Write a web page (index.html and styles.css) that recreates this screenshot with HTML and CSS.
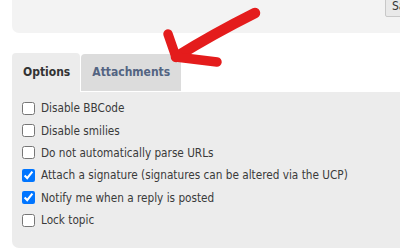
FILE: index.html
```html
<!DOCTYPE html>
<html>
<head>
<meta charset="utf-8">
<link rel="stylesheet" href="styles.css">
</head>
<body>
<div class="page">
  <div class="top-panel">
    <button class="btn">Save draft</button>
  </div>
  <div class="tabs">
    <div class="tab active">Options</div>
    <div class="tab">Attachments</div>
  </div>
  <div class="panel">
    <label class="row"><input type="checkbox"><span>Disable BBCode</span></label>
    <label class="row"><input type="checkbox"><span>Disable smilies</span></label>
    <label class="row"><input type="checkbox"><span>Do not automatically parse URLs</span></label>
    <label class="row"><input type="checkbox" checked><span>Attach a signature (signatures can be altered via the UCP)</span></label>
    <label class="row"><input type="checkbox" checked><span>Notify me when a reply is posted</span></label>
    <label class="row"><input type="checkbox"><span>Lock topic</span></label>
  </div>
  <svg class="arrow" width="400" height="252" viewBox="0 0 400 252">
    <path d="M255 13 Q213 34 176 57" fill="none" stroke="#e41c1c" stroke-width="10.5" stroke-linecap="round"/>
    <path d="M168 34 L176 57 L217 62" fill="none" stroke="#e41c1c" stroke-width="9.5" stroke-linecap="round" stroke-linejoin="round"/>
  </svg>
</div>
</body>
</html>
```
FILE: styles.css
```css
html, body {
  margin: 0;
  padding: 0;
  background: #ffffff;
}
.page {
  position: relative;
  width: 400px;
  height: 252px;
  overflow: hidden;
  font-family: "DejaVu Sans Condensed", "DejaVu Sans", sans-serif;
  font-size: 11.7px;
  color: #3a3a3a;
}
.top-panel {
  margin-left: 12px;
  height: 33px;
  background: #f3f3f3;
  border-bottom-left-radius: 7px;
  display: flex;
  justify-content: flex-start;
}
.btn {
  margin-left: 373px;
  margin-top: -6px;
  height: 23px;
  padding: 0 6px;
  background: #e9e9e9;
  border: 1px solid #c8c8c8;
  border-radius: 2px;
  font-family: inherit;
  font-size: 12px;
  color: #333;
  white-space: nowrap;
}
.tabs {
  margin-top: 20px;
  margin-left: 12px;
  display: flex;
  gap: 1px;
}
.tab {
  font-weight: bold;
  font-size: 12px;
  color: #536482;
  background: #dcdcdc;
  border-radius: 4px 4px 0 0;
  padding: 0 11px 0 11px;
  margin-top: 1px;
  height: 37px;
  line-height: 37px;
}
.tab.active {
  color: #333333;
  background: #ececec;
  margin-top: 0;
  height: 39px;
  line-height: 39px;
  padding: 0 10px 0 11px;
}
.panel {
  margin-left: 12px;
  background: #ececec;
  border-bottom-left-radius: 7px;
  padding: 5px 0 17px 10px;
  display: flex;
  flex-direction: column;
}
.row {
  display: flex;
  align-items: center;
  height: 22.4px;
}
.row input {
  margin: 0 6px 0 0;
  width: 13px;
  height: 13px;
}
.arrow {
  position: absolute;
  left: 0;
  top: 0;
  pointer-events: none;
}
```
